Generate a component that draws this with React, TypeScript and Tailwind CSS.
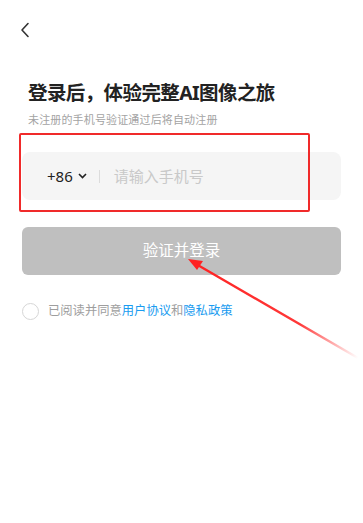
import React from "react";

export default function App() {
  const font = { fontFamily: '"Noto Sans", "Noto Sans CJK SC", sans-serif' };
  return (
    <div className="relative w-[363px] h-[523px] bg-white overflow-hidden" style={font}>
      <div className="pt-[22px] pl-[20px]">
        <svg width="10" height="16" viewBox="0 0 10 16">
          <path d="M8 1.5 L2 8 L8 14.5" fill="none" stroke="#333" strokeWidth="1.6" strokeLinecap="round" strokeLinejoin="round" />
        </svg>
      </div>
      <div className="px-[22px]">
        <h1 className="mt-[41px] pl-[6px] text-[19.5px] leading-[28px] font-bold text-[#222] tracking-[-0.6px]">
          登录后，体验完整AI图像之旅
        </h1>
        <p className="mt-[5px] pl-[6px] text-[11px] leading-[16px] text-[#a3a3a3] tracking-[0.15px]">未注册的手机号验证通过后将自动注册</p>
        <div className="mt-[24px] h-[48px] rounded-[8px] bg-[#f5f5f5] flex items-center">
          <span className="ml-[25px] text-[15px] text-[#222]">+86</span>
          <svg className="ml-[5px]" width="9" height="6" viewBox="0 0 9 6">
            <path d="M1 1 L4.5 4.5 L8 1" fill="none" stroke="#222" strokeWidth="1.6" />
          </svg>
          <span className="ml-[12px] w-px h-[13px] bg-[#dcdcdc]" />
          <span className="ml-[14px] text-[15px] text-[#c9c9c9]">请输入手机号</span>
        </div>
        <button className="mt-[27px] w-full h-[48px] rounded-[6px] bg-[#bfbfbf] text-white text-[15.5px] font-normal">
          验证并登录
        </button>
        <div className="mt-[27px] flex items-center">
          <span className="w-[17px] h-[17px] rounded-full border border-[#d6d6d6]" />
          <span className="ml-[9px] text-[12.3px] text-[#9e9e9e]">
            已阅读并同意<span className="text-[#1a9cf0]">用户协议</span>和<span className="text-[#1a9cf0]">隐私政策</span>
          </span>
        </div>
      </div>
      <div className="absolute left-[19px] top-[133px] w-[291px] h-[79px] border-2 border-[#f02a2a] rounded-[2px]" />
      <svg className="absolute left-0 top-0" width="363" height="523" viewBox="0 0 363 523">
        <defs>
          <linearGradient id="g" x1="358" y1="358" x2="190" y2="260" gradientUnits="userSpaceOnUse">
            <stop offset="0" stopColor="#f22" stopOpacity="0" />
            <stop offset="0.35" stopColor="#f22" stopOpacity="0.9" />
            <stop offset="1" stopColor="#f22" stopOpacity="1" />
          </linearGradient>
        </defs>
        <path d="M358 358 L196 264" stroke="url(#g)" strokeWidth="2.4" strokeLinecap="round" />
        <polygon points="188,259 203,261 197,270" fill="#f22" />
      </svg>
    </div>
  );
}
